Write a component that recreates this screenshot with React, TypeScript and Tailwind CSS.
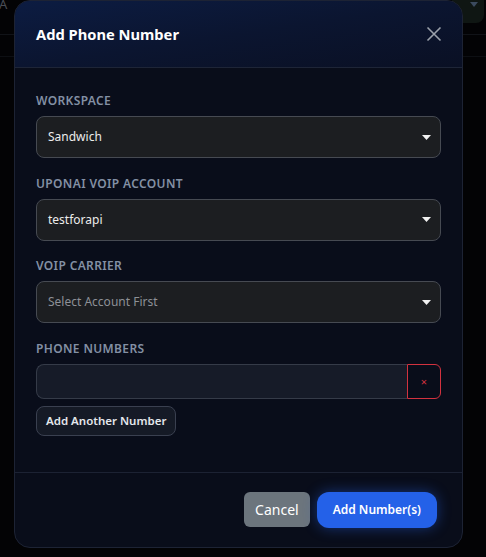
import React from "react"

const FONT = "font-['Noto_Sans','Open_Sans',sans-serif]"

function Caret() {
  return (
    <svg width="9" height="5" viewBox="0 0 9 5" className="shrink-0">
      <path d="M0 0 H9 L4.5 5 Z" fill="#f1f1f1" />
    </svg>
  )
}

function SelectField({ label, value, muted }: { label: string; value: string; muted?: boolean }) {
  return (
    <div className="flex flex-col">
      <div className="mb-[8px] text-[12px] leading-[14px] font-semibold uppercase tracking-[0.03em] text-[#8390a4]">
        {label}
      </div>
      <div className="flex h-[42px] items-center justify-between rounded-[8px] border border-[#464a52] bg-[#1c1e21] pl-[11px] pr-[9px]">
        <span className={muted ? "text-[12px] text-[#8d9096]" : "text-[12px] text-[#ececec]"}>{value}</span>
        <Caret />
      </div>
    </div>
  )
}

export default function App() {
  return (
    <div className={`relative h-[557px] w-[486px] overflow-hidden bg-[#030305] ${FONT}`}>
      {/* page behind the overlay */}
      <div className="absolute left-[-1px] top-[-5px] text-[13px] text-[#4a4d55]">A</div>
      <div className="absolute right-[2px] top-[-8px] flex h-[31px] w-[32px] justify-end rounded-[8px] bg-[#0f1613] pr-[6px] pt-[10px]">
        <svg width="8" height="5" viewBox="0 0 8 5">
          <path d="M0 0 H8 L4 5 Z" fill="#3b4a5e" />
        </svg>
      </div>
      <div className="absolute left-0 right-0 top-[34px] h-px bg-[#111318]" />
      <div className="absolute left-0 right-0 top-[56px] h-px bg-[#0d0f13]" />

      <div className="relative ml-[14px] flex h-[548px] w-[449px] flex-col overflow-hidden rounded-[16px] border border-[#1d2334] bg-[#090d1a]">
        <div className="flex h-[67px] shrink-0 items-center justify-between border-b border-[#1e2537] bg-gradient-to-br from-[#0c1c42] via-[#0b1530] to-[#0a1024] pl-[21px] pr-[20px]">
          <h2 className="text-[14.7px] font-bold text-white">Add Phone Number</h2>
          <svg width="16" height="16" viewBox="0 0 16 16">
            <path d="M1.5 1.5 L14.5 14.5 M14.5 1.5 L1.5 14.5" stroke="#9aa0aa" strokeWidth="1.6" />
          </svg>
        </div>

        <div className="flex flex-col gap-[18.5px] px-[21px] pb-[36px] pt-[26px]">
          <SelectField label="Workspace" value="Sandwich" />
          <SelectField label="UponAI VoIP Account" value="testforapi" />
          <SelectField label="VoIP Carrier" value="Select Account First" muted />
          <div className="flex flex-col">
            <div className="mb-[8px] text-[12px] leading-[14px] font-semibold uppercase tracking-[0.03em] text-[#8390a4]">
              Phone Numbers
            </div>
            <div className="flex h-[35px]">
              <div className="flex-1 rounded-l-[8px] border border-r-0 border-[#353b48] bg-[#161b28]" />
              <div className="flex w-[34px] items-center justify-center rounded-r-[6px] border border-[#d2323f] text-[11px] leading-none text-[#d2323f]">
                ×
              </div>
            </div>
            <div className="mt-[7px] flex">
              <div className="flex h-[30px] items-center rounded-[8px] border border-[#3a4050] bg-[#151a26] px-[9px] text-[11.5px] font-semibold text-[#e4e7ec]">
                Add Another Number
              </div>
            </div>
          </div>
        </div>

        <div className="flex flex-1 items-center justify-end gap-[7px] border-t border-[#1c2233] pr-[25px]">
          <div className="flex h-[35px] items-center rounded-[6px] bg-[#6c757d] px-[11px] text-[14px] text-white">
            Cancel
          </div>
          <div className="flex h-[36px] items-center rounded-[12px] bg-[#2461e8] px-[16px] text-[12px] font-semibold text-white shadow-[0_0_14px_rgba(37,99,235,0.45)]">
            Add Number(s)
          </div>
        </div>
      </div>
    </div>
  )
}
